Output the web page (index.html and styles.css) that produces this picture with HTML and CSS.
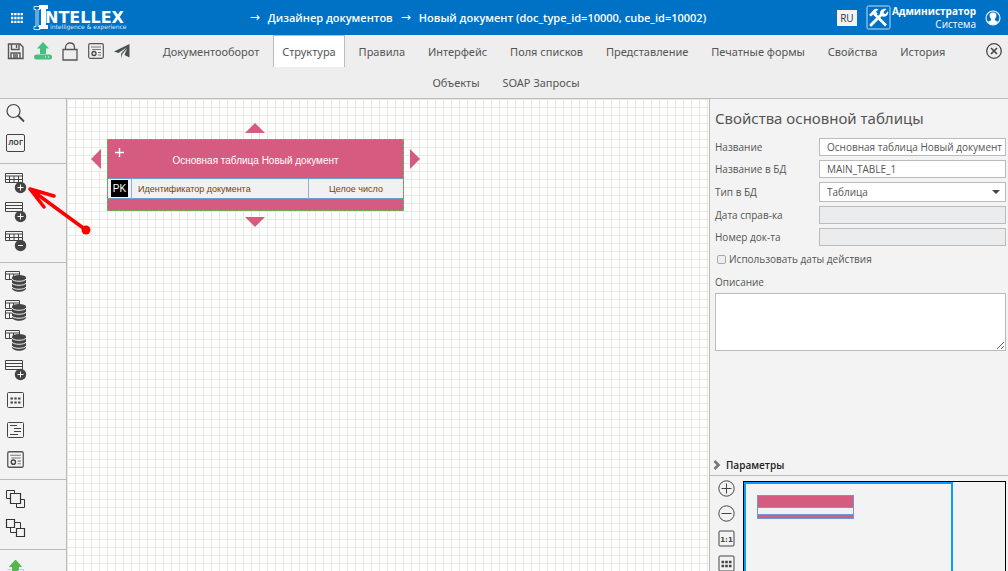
FILE: index.html
```html
<!DOCTYPE html>
<html lang="ru">
<head>
<meta charset="utf-8">
<title>Intellex – Дизайнер документов</title>
<link rel="stylesheet" href="styles.css">
</head>
<body>
<svg class="defs" aria-hidden="true">
  <symbol id="grid-head" viewBox="0 0 36 29">
    <path d="M5.5 4.5h17v9h-17z" fill="#f6f6f6" stroke="#444"/>
    <path d="M5 7h18M5 10.5h18M9.5 7v6.500M14 7v6.500M18.500 7v6.500" stroke="#444" fill="none"/>
  </symbol>
  <symbol id="rows-head" viewBox="0 0 36 29">
    <path d="M5.500 4.500h17v9h-17z" fill="#f6f6f6" stroke="#444"/>
    <path d="M5 7.500h18M5 10.500h18" stroke="#444"/>
  </symbol>
  <symbol id="small-grid" viewBox="0 0 36 29">
    <path d="M5.500 3.500h14v8h-14z" fill="#f6f6f6" stroke="#444"/>
    <path d="M5 6h15M9.500 6v5M13.500 6v5" stroke="#444"/>
  </symbol>
  <symbol id="plus-dot" viewBox="0 0 36 29">
    <circle cx="20.500" cy="18.500" r="5.700" fill="#444"/>
    <path d="M17.500 18.500h6M20.500 15.500v6" stroke="#fff"/>
  </symbol>
  <symbol id="disks" viewBox="0 0 36 29">
    <path d="M12 10v10c0 5 14 5 14 0V10z" fill="#444"/>
    <ellipse cx="19" cy="9.500" rx="7" ry="2.500" fill="#444"/>
    <path d="M12 11c1 3 13 3 14 0M12 15c1 3 13 3 14 0M12 19c1 3 13 3 14 0" fill="none" stroke="#f3f3f3"/>
  </symbol>
  <symbol id="certificate" viewBox="0 0 16 16">
    <rect x=".7" y=".7" width="14.600" height="14.600" rx="1.500" fill="none" stroke="#555" stroke-width="1.200"/>
    <path d="M3 4h10M4 6.500h9M10 9.500h3M10 12h3" stroke="#777"/>
    <circle cx="6" cy="10.500" r="2" fill="none" stroke="#444" stroke-width="1.300"/>
  </symbol>
</svg>
<div class="app">
  <header class="topbar">
    <button class="plain apps" aria-label="Приложения"><svg width="12" height="10" viewBox="0 0 12 10"><path d="M0 1h12M0 5h12M0 9h12" stroke="#fff" stroke-width="2.400" stroke-dasharray="2.300 .9"/></svg></button>
    <a class="logo" href="#" aria-label="Intellex">
      <svg width="94" height="26" viewBox="0 0 94 26">
        <path d="M1 1.500h6v3H5v17h2v3H1v-3h2v-17H1z" fill="none" stroke="#fff" stroke-width=".8"/>
        <path d="M6 0h9v4h-2v16h2v4H6v-4h2V4H6z" fill="#fff"/>
        <text class="logo-name" x="12" y="18">NTELLEX</text>
        <text class="logo-tag" x="17" y="24">intelligence &amp; experience</text>
      </svg>
    </a>
    <nav class="crumbs"><span class="arrow">→</span><a href="#">Дизайнер документов</a><span class="arrow">→</span><a href="#">Новый документ (doc_type_id=10000, cube_id=10002)</a></nav>
    <button class="lang">RU</button>
    <button class="plain" aria-label="Настройки"><svg width="25" height="25" viewBox="0 0 25 25"><rect x="1" y="1" width="23" height="23" rx="1.500" fill="none" stroke="#c6dcf0"/><path d="M5 20L15.500 9.500" stroke="#fff" stroke-width="3" stroke-linecap="round"/><path d="M20.500 4l-3 3 .5 1.500 1.500.5 2.500-3c1 3.500-2 6.500-5.500 5.500L14 9c-.5-3.500 3-6 6.500-5z" fill="#fff"/><path d="M9 9.500L20 20.500" stroke="#fff" stroke-width="2.600"/><path d="M3 10l5-5.500c1.500-1 3-1 4.500 0L10 6.500l1.500 2L8.500 11 7 9.500l-2 2z" fill="#fff"/></svg></button>
    <div class="user"><strong>Администратор</strong><span>Система</span></div>
    <button class="plain" aria-label="Профиль"><svg width="16" height="16" viewBox="0 0 16 16"><circle cx="8" cy="8" r="7" fill="#0072c6" stroke="#fff" stroke-width="1.100"/><path d="M8 2.500c5 0 3.500 5 1.800 6.500l.2 1.200 3 1.500c-2.500 4-7.500 4-10 0l3-1.500.2-1.200C4.500 7.500 3 2.500 8 2.500z" fill="#fff"/></svg></button>
  </header>

  <div class="toolbar">
    <div class="tools">
      <button class="plain" aria-label="Сохранить"><svg width="17" height="17" viewBox="0 0 17 17" fill="none" stroke="#555" stroke-width="1.400"><path d="M1.500 1h11.500l3 3v11.500h-14.500z"/><path d="M4.500 1v5.500h7.500V1M4 15.500V10h9v5.500M6 12h5M6 14h5"/><path d="M9.500 2v3"/></svg></button>
      <button class="plain" aria-label="Опубликовать"><svg width="18" height="18" viewBox="0 0 18 18"><path d="M9 0l6 6.500h-3V12H6V6.500H3z" fill="#45c080"/><rect x="0" y="12.500" width="18" height="5" rx="2.500" fill="#45c080"/><path d="M11 15h1M14 15h1" stroke="#fff"/></svg></button>
      <button class="plain" aria-label="Блокировка"><svg width="16" height="19" viewBox="0 0 16 19" fill="none" stroke="#555" stroke-width="1.300"><path d="M1 7.500h14v10.500H1zM3.500 7V5.500c0-6 9-6 9 0V7"/></svg></button>
      <button class="plain" aria-label="Отчёт"><svg width="16" height="16"><use href="#certificate"/></svg></button>
      <button class="plain" aria-label="Отправить"><svg width="16" height="15" viewBox="0 0 16 15"><path d="M15.500 0v13.500L10.500 11 13 4.500 8 10.500 7 14.500V9.800L12.500 3.500 4.500 9 0 7.500z" fill="#4b514f"/></svg></button>
    </div>
    <button class="plain close" aria-label="Закрыть"><svg width="16" height="16" viewBox="0 0 16 16" fill="none" stroke="#484848"><circle cx="8" cy="8" r="7.300" stroke-width="1.300"/><path d="M5 5l6 6M11 5l-6 6" stroke-width="1.700"/></svg></button>
    <nav class="tabs">
      <a href="#">Документооборот</a>
      <a class="active" href="#">Структура</a>
      <a href="#">Правила</a>
      <a href="#">Интерфейс</a>
      <a href="#">Поля списков</a>
      <a href="#">Представление</a>
      <a href="#">Печатные формы</a>
      <a href="#">Свойства</a>
      <a href="#">История</a>
      <a href="#">Объекты</a>
      <a href="#">SOAP Запросы</a>
    </nav>
  </div>

  <main class="work">
    <aside class="side">
      <div class="group first">
        <button class="plain" aria-label="Поиск"><svg width="36" height="29" viewBox="0 0 36 29" fill="none" stroke="#444"><circle cx="13.500" cy="12" r="6.500" stroke-width="1.200"/><path d="M18 16.500l6 6" stroke-width="1.800"/></svg></button>
        <button class="plain" aria-label="Лог"><svg width="36" height="29" viewBox="0 0 36 29"><rect x="6.500" y="6.500" width="18" height="17" rx="1.500" fill="none" stroke="#444"/><text class="log-text" x="15.500" y="17">ЛОГ</text></svg></button>
      </div>
      <div class="group">
        <button class="plain" aria-label="Добавить таблицу"><svg width="36" height="29"><use href="#grid-head"/><use href="#plus-dot"/></svg></button>
        <button class="plain" aria-label="Добавить поле"><svg width="36" height="29"><use href="#rows-head"/><use href="#plus-dot"/></svg></button>
        <button class="plain" aria-label="Удалить таблицу"><svg width="36" height="29" viewBox="0 0 36 29"><use href="#grid-head"/><circle cx="20.500" cy="18.500" r="5.700" fill="#444"/><path d="M18 18.500h5" stroke="#fff"/></svg></button>
      </div>
      <div class="group long">
        <button class="plain" aria-label="Таблица базы"><svg width="36" height="29"><use href="#small-grid"/><use href="#disks"/></svg></button>
        <button class="plain" aria-label="Таблицы базы"><svg width="36" height="29"><use href="#small-grid"/><use href="#small-grid" y="10"/><use href="#disks"/></svg></button>
        <button class="plain" aria-label="Импорт таблицы"><svg width="36" height="29"><use href="#small-grid"/><use href="#disks"/></svg></button>
        <button class="plain" aria-label="Добавить строку"><svg width="36" height="29"><use href="#rows-head"/><use href="#plus-dot"/></svg></button>
        <button class="plain" aria-label="Сетка"><svg width="36" height="29" viewBox="0 0 36 29"><rect x="7.500" y="7.500" width="16" height="15" rx="1" fill="none" stroke="#444"/><path d="M10.500 13.500h10M10.500 17.500h10" stroke="#444" stroke-width="2.200" stroke-dasharray="2.400 1.400"/></svg></button>
        <button class="plain" aria-label="Выравнивание"><svg width="36" height="29" viewBox="0 0 36 29"><rect x="7.500" y="7.500" width="16" height="15" rx="1" fill="none" stroke="#444"/><path d="M10 10.500h7M14 13.500h7M14 16.500h7M10 19.500h8" stroke="#444"/></svg></button>
        <button class="plain" aria-label="Документ"><svg width="36" height="29"><use href="#certificate" x="7" y="7" width="17" height="17"/></svg></button>
      </div>
      <div class="group">
        <button class="plain" aria-label="На передний план"><svg width="36" height="29" viewBox="0 0 36 29" fill="#f3f3f3" stroke="#333"><path d="M6.500 5.500h8v8h-8zM16.500 14.500h8v8h-8z"/><path d="M10.500 8.500h10v10h-10z" stroke-width="1.200"/></svg></button>
        <button class="plain" aria-label="На задний план"><svg width="36" height="29" viewBox="0 0 36 29" fill="#f3f3f3" stroke="#333"><path d="M10.500 8.500h10v10h-10z"/><path d="M6.500 5.500h8v8h-8zM16.500 14.500h8v8h-8z" stroke-width="1.200"/></svg></button>
      </div>
      <div class="group">
        <button class="plain" aria-label="Выгрузить"><svg width="36" height="29" viewBox="0 0 36 29"><path d="M15.500 5l6 6.500h-3V18h-6v-6.500h-3z" fill="#52b848" stroke="#3f9f3b" stroke-width=".6"/><path d="M7.500 14.500h4m8 0h4V25h-16z" fill="none" stroke="#b5cfe0"/></svg></button>
      </div>
    </aside>

    <section class="canvas" aria-label="Схема">
      <div class="node">
        <div class="node-head"><button class="plain node-plus" aria-label="Добавить"><svg width="9" height="9" viewBox="0 0 9 9"><path d="M0 4.500h9M4.500 0v9" stroke="#fff" stroke-width="1.400"/></svg></button>Основная таблица Новый документ</div>
        <div class="node-row">
          <span class="key"><b>PK</b></span>
          <span class="field">Идентификатор документа</span>
          <span class="kind">Целое число</span>
        </div>
        <i class="tri up"></i><i class="tri down"></i><i class="tri left"></i><i class="tri right"></i>
      </div>
    </section>

    <aside class="panel">
      <form class="props">
        <h1>Свойства основной таблицы</h1>
        <div class="fields">
          <label for="name">Название</label><input id="name" type="text" value="Основная таблица Новый документ">
          <label for="db">Название в БД</label><input id="db" type="text" value="MAIN_TABLE_1">
          <label for="type">Тип в БД</label><div class="pick"><select id="type"><option>Таблица</option></select></div>
          <label for="date">Дата справ-ка</label><input id="date" type="text" disabled>
          <label for="num">Номер док-та</label><input id="num" type="text" disabled>
        </div>
        <label class="check"><input type="checkbox">Использовать даты действия</label>
        <label class="desc-label" for="desc">Описание</label>
        <textarea id="desc"></textarea>
      </form>
      <button class="plain params"><svg width="8" height="10" viewBox="0 0 8 10"><path d="M1.500 1l4 4-4 4" fill="none" stroke="#777" stroke-width="2.600"/></svg>Параметры</button>
      <div class="overview">
        <div class="zoom">
          <button class="plain" aria-label="Увеличить"><svg width="17" height="17" viewBox="0 0 17 17" fill="none" stroke="#444"><circle cx="8.500" cy="8.500" r="7.700"/><path d="M3.500 8.500h10M8.500 3.500v10"/></svg></button>
          <button class="plain" aria-label="Уменьшить"><svg width="17" height="17" viewBox="0 0 17 17" fill="none" stroke="#444"><circle cx="8.500" cy="8.500" r="7.700"/><path d="M3.500 8.500h10"/></svg></button>
          <button class="plain" aria-label="Масштаб 1:1"><svg width="17" height="17" viewBox="0 0 17 17"><rect x="1" y="1" width="15" height="15" rx="1" fill="none" stroke="#444"/><text class="ratio" x="8.500" y="12">1:1</text></svg></button>
          <button class="plain" aria-label="Сетка"><svg width="17" height="17" viewBox="0 0 17 17"><rect x="1" y="1" width="15" height="15" rx="1" fill="none" stroke="#444"/><path d="M3.500 7h10M3.500 11h10" stroke="#444" stroke-width="2.400" stroke-dasharray="2.600 1.100"/></svg></button>
        </div>
        <div class="map"><div class="viewport"><div class="mini"></div></div></div>
      </div>
    </aside>
  </main>
  <svg class="pointer" width="66" height="52" viewBox="0 0 66 52" aria-hidden="true"><path d="M5 4l56 41M5 4l24 7M5 4l14 18" fill="none" stroke="#f00" stroke-width="3.500" stroke-linecap="round"/><path d="M4 3l12 3-4 8z" fill="#f00"/><circle cx="61" cy="45" r="4.500" fill="#f00"/></svg>
</div>
</body>
</html>
```
FILE: styles.css
```css
* { box-sizing: border-box; }
body { margin: 0; font-family: "Noto Sans", "Open Sans", sans-serif; color: #555; }
.defs { position: absolute; width: 0; height: 0; }
a { color: inherit; text-decoration: none; }
button, input, select, textarea { font: inherit; color: inherit; margin: 0; }
svg { display: block; }
.plain { border: 0; padding: 0; background: none; cursor: pointer; }

.app { position: relative; display: flex; flex-direction: column; height: 100vh; overflow: hidden; }

.topbar { display: flex; align-items: center; height: 35px; padding: 0 7px 0 11px; background: #0072c6; color: #fff; flex: none; font-family: "Open Sans", "Noto Sans", sans-serif; }
.logo { margin-left: 10px; }
.logo-name { font: bold 16px "DejaVu Sans", sans-serif; fill: #fff; }
.logo-tag { font: 6px "DejaVu Sans", sans-serif; fill: #d6e8f7; }
.crumbs { flex: 1; display: flex; justify-content: center; padding-right: 16px; font-size: 11px; font-weight: 600; white-space: nowrap; }
.arrow { margin: 0 8px; font-family: "DejaVu Sans", sans-serif; font-size: 12px; line-height: 15px; font-weight: 400; }
.lang { width: 20px; height: 16px; padding: 0; border: 0; background: #f3f3f3; color: #333; font-size: 10px; line-height: 16px; margin-right: 9px; }
.user { display: flex; flex-direction: column; align-items: flex-end; margin: 0 9px 0 1px; font-size: 10px; line-height: 13px; }

.toolbar { flex: none; background: #eee; border-bottom: 1px solid #bcbcbc; }
.tools { float: left; display: flex; align-items: center; gap: 10px; height: 31px; padding: 1px 8px 0 7px; }
.close { float: right; margin: 8px 6px 0 16px; }
.tabs { padding: 0 0 1px 4px; text-align: center; font-size: 11px; line-height: 31px; }
.tabs a { display: inline-block; vertical-align: top; padding: 0 8px; border: 1px solid transparent; border-bottom: 0; height: 32px; margin: 0 1px -1px; }
.tabs .active { background: #fff; border-color: #bbb; }

.work { flex: 1; min-height: 0; display: grid; grid-template-columns: 67px minmax(0, 1fr) 299px; }
.side { background: #f3f3f3; border-right: 1px solid #bbb; overflow: hidden; }
.group { display: flex; flex-direction: column; align-items: flex-start; padding: 5px 0 6px; border-bottom: 1px solid #bbb; }
.first { padding-top: 0; }
.long { justify-content: space-between; min-height: 217px; }
.log-text { font: bold 7px "Open Sans", sans-serif; fill: #444; text-anchor: middle; }

.canvas { position: relative; overflow: hidden; background-color: #fff; background-image: linear-gradient(#e8eadf 1px, transparent 1px), linear-gradient(90deg, #e8eadf 1px, transparent 1px); background-size: 8px 8px; }
.node { position: absolute; left: 40px; top: 40px; width: 297px; padding-bottom: 11px; background: #d65b80; border: 1px dashed #3ad04a; font: 9px "Liberation Sans", Arial, sans-serif; }
.node-head { position: relative; height: 38px; padding-top: 2px; font-size: 10px; line-height: 37px; text-align: center; color: #fff; }
.node-plus { position: absolute; left: 7px; top: 8px; }
.node-row { display: grid; grid-template-columns: 23px 1fr 94px; height: 21px; background: #f1f1f1; border: 1px solid #6b9bd1; border-width: 1px 0; line-height: 20px; color: #740; }
.key { padding: 1px 3px; }
.key b { display: block; width: 17px; background: #000; color: #fff; font-size: 10px; line-height: 17px; text-align: center; font-weight: 400; }
.field { border: 1px solid #8db2dc; border-width: 0 1px; padding-left: 6px; }
.kind { text-align: center; }
.tri { position: absolute; width: 20px; height: 10px; background: #d65b80; }
.up, .down { left: 137px; }
.up { top: -17px; clip-path: polygon(50% 0, 100% 100%, 0 100%); }
.down { bottom: -17px; clip-path: polygon(0 0, 100% 0, 50% 100%); }
.left, .right { width: 10px; height: 20px; top: 9px; }
.left { left: -17px; clip-path: polygon(0 50%, 100% 0, 100% 100%); }
.right { right: -17px; clip-path: polygon(0 0, 100% 50%, 0 100%); }

.panel { display: flex; flex-direction: column; min-height: 0; background: #f3f3f3; border-left: 1px solid #bbb; font-family: "Open Sans", "Noto Sans", sans-serif; font-size: 10px; }
.props { flex: 1; padding: 7px 2px 0 5px; }
.props h1 { margin: 0 0 8px; font-family: "Noto Sans", sans-serif; font-size: 15px; font-weight: 400; line-height: 24px; }
.fields { display: grid; grid-template-columns: 104px 1fr; row-gap: 4px; align-items: center; line-height: 16px; }
.fields input, .pick { height: 18px; width: 100%; min-width: 0; border: 1px solid #bbb; border-radius: 0; background: #fff; padding: 0 2px 0 7px; line-height: 16px; }
.fields input:disabled { background: #ebecee; }
.fields .pick { position: relative; height: 20px; }
.pick select { display: block; width: 100%; height: 18px; padding: 0; border: 0; background: none; appearance: none; line-height: 18px; }
.pick::after { content: ""; position: absolute; right: 5px; top: 7px; border: 4px solid transparent; border-top-color: #444; border-bottom: 0; }
.check { display: flex; align-items: center; gap: 3px; margin: 5px 0 7px 2px; line-height: 16px; }
.check input { appearance: none; width: 9px; height: 9px; border: 1px solid #aaa; border-radius: 2px; background: #eee; }
.desc-label { display: block; line-height: 16px; margin-bottom: 3px; }
.props textarea { display: block; width: 100%; height: 58px; border: 1px solid #bbb; border-radius: 0; background: #fff; }
.params { display: flex; align-items: center; gap: 5px; padding: 0 3px; height: 21px; color: #222; font-weight: 600; border-bottom: 1px solid #bbb; }
.overview { flex: none; display: flex; height: 95px; overflow: hidden; padding: 4px 2px 0 8px; gap: 8px; }
.zoom { display: flex; flex-direction: column; gap: 8px; }
.ratio { font: bold 7px "DejaVu Sans", sans-serif; fill: #444; text-anchor: middle; }
.map { flex: 1; height: 180px; margin-top: 1px; border: 1px solid #000; }
.viewport { width: 80%; height: 150px; border: 2px solid #0a9bff; padding: 11px; }
.mini { width: 97px; height: 24px; border: 1px solid #6b9bd1; background: linear-gradient(#d65b80 11px, #6b9bd1 11px 12px, #f1f1f1 12px 18px, #6b9bd1 18px 19px, #d65b80 19px); }

.pointer { position: absolute; left: 25px; top: 185px; }
```
